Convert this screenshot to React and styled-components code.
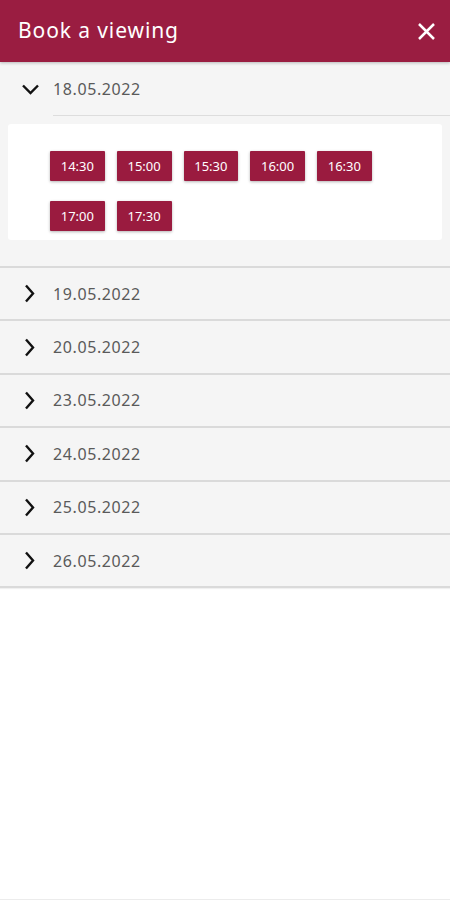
import React, { useState } from "react";
import styled, { createGlobalStyle } from "styled-components";

const GlobalStyle = createGlobalStyle`
  html, body {
    margin: 0;
    padding: 0;
    background: #fff;
  }
  body {
    font-family: "Noto Sans", "Open Sans", sans-serif;
  }
  * {
    box-sizing: border-box;
  }
`;

const Page = styled.div`
  min-height: 100vh;
  background: #fff;
  border-bottom: 1px solid #ececec;
  display: flex;
  flex-direction: column;
`;

const Header = styled.header`
  height: 62px;
  background: #9a1d41;
  display: flex;
  align-items: center;
  justify-content: space-between;
  padding: 0 8px 0 18px;
  box-shadow: 0 1px 3px rgba(0, 0, 0, 0.25);
  position: relative;
  z-index: 2;
`;

const Title = styled.h1`
  margin: 0;
  font-size: 21px;
  font-weight: 400;
  color: #fff;
  letter-spacing: 0.9px;
  padding-bottom: 2px;
`;

const CloseButton = styled.button`
  width: 32px;
  height: 32px;
  border: 0;
  background: none;
  padding: 0;
  display: flex;
  align-items: center;
  justify-content: center;
  cursor: pointer;
`;

const List = styled.div`
  display: flex;
  flex-direction: column;
`;

const Panel = styled.section`
  background: #f5f5f5;
  border-bottom: 2px solid #dadada;
  box-shadow: 0 1px 1px rgba(0, 0, 0, 0.06);
`;

const PanelHead = styled.button`
  width: 100%;
  height: ${(p) => (p.$open ? "53px" : "51.4px")};
  border: 0;
  background: none;
  padding: 0 0 0 ${(p) => (p.$open ? "21px" : "24px")};
  display: flex;
  align-items: center;
  gap: ${(p) => (p.$open ? "13px" : "18px")};
  cursor: pointer;
  font: inherit;
`;

const DateText = styled.span`
  font-size: 16px;
  color: #5a5a5a;
  letter-spacing: 0.6px;
  padding-top: ${(p) => (p.$open ? "1px" : "0")};
`;

const Divider = styled.div`
  margin-left: 53px;
  border-top: 1px solid #dddddd;
`;

const Body = styled.div`
  padding: 8px 8px 26px;
`;

const Card = styled.div`
  background: #fff;
  border-radius: 3px;
  padding: 27px 42px 9px;
  display: flex;
  flex-wrap: wrap;
  column-gap: 12px;
  row-gap: 20px;
`;

const Slot = styled.button`
  width: 54.75px;
  height: 30px;
  border: 0;
  border-radius: 1px;
  background: #9a1b3f;
  color: #fff;
  font-family: "Noto Sans", sans-serif;
  font-size: 13px;
  letter-spacing: 0;
  box-shadow: 0 1px 3px rgba(0, 0, 0, 0.3);
  cursor: pointer;
  padding: 0;
`;

const ChevronDown = () => (
  <svg width="19" height="12" viewBox="0 0 19 12">
    <path d="M2 2.5 L9.5 10 L17 2.5" fill="none" stroke="#111" strokeWidth="2.4" />
  </svg>
);

const ChevronRight = () => (
  <svg width="11" height="19" viewBox="0 0 11 19">
    <path d="M2 1.5 L9 9.5 L2 17.5" fill="none" stroke="#111" strokeWidth="2.4" />
  </svg>
);

const CloseIcon = () => (
  <svg width="19" height="19" viewBox="0 0 19 19">
    <path d="M2 2 L17 17 M17 2 L2 17" fill="none" stroke="#fff" strokeWidth="2.5" />
  </svg>
);

const dates = [
  { date: "18.05.2022", slots: ["14:30", "15:00", "15:30", "16:00", "16:30", "17:00", "17:30"] },
  { date: "19.05.2022", slots: [] },
  { date: "20.05.2022", slots: [] },
  { date: "23.05.2022", slots: [] },
  { date: "24.05.2022", slots: [] },
  { date: "25.05.2022", slots: [] },
  { date: "26.05.2022", slots: [] },
];

const App = () => {
  const [open, setOpen] = useState("18.05.2022");

  return (
    <Page>
      <GlobalStyle />
      <Header>
        <Title>Book a viewing</Title>
        <CloseButton aria-label="Close">
          <CloseIcon />
        </CloseButton>
      </Header>
      <List>
        {dates.map((d) => {
          const isOpen = open === d.date;
          return (
            <Panel key={d.date}>
              <PanelHead $open={isOpen} onClick={() => setOpen(isOpen ? null : d.date)}>
                {isOpen ? <ChevronDown /> : <ChevronRight />}
                <DateText $open={isOpen}>{d.date}</DateText>
              </PanelHead>
              {isOpen && (
                <>
                  <Divider />
                  <Body>
                    <Card>
                      {d.slots.map((s) => (
                        <Slot key={s}>{s}</Slot>
                      ))}
                    </Card>
                  </Body>
                </>
              )}
            </Panel>
          );
        })}
      </List>
    </Page>
  );
};

export default App;
